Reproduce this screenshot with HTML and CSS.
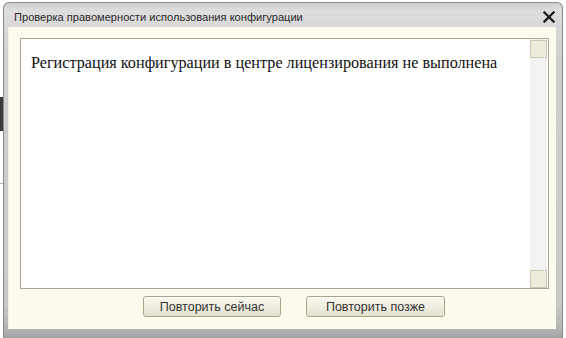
FILE: index.html
```html
<!DOCTYPE html>
<html lang="ru">
<head>
<meta charset="utf-8">
<title>Проверка правомерности использования конфигурации</title>
<link rel="stylesheet" href="styles.css">
</head>
<body>
<div class="desk">
  <div class="desk-dark"></div>
  <div class="desk-line"></div>
</div>
<div class="window">
  <div class="titlebar">
    <span class="title">Проверка правомерности использования конфигурации</span>
    <span class="close">
      <svg width="12" height="12" viewBox="0 0 12 12"><path d="M1.5 1.5 L10.5 10.5 M10.5 1.5 L1.5 10.5" stroke="#1e1e1e" stroke-width="2.3" stroke-linecap="square"/></svg>
    </span>
  </div>
  <div class="frame">
    <div class="textbox">
      <div class="message">Регистрация конфигурации в центре лицензирования не выполнена</div>
      <div class="scrollbar">
        <div class="sb-btn"></div>
        <div class="sb-track"></div>
        <div class="sb-btn"></div>
      </div>
    </div>
    <div class="buttons">
      <button class="btn btn-now">Повторить сейчас</button>
      <button class="btn btn-later">Повторить позже</button>
    </div>
  </div>
</div>
</body>
</html>
```
FILE: styles.css
```css
html, body {
  margin: 0;
  padding: 0;
}
body {
  width: 566px;
  height: 338px;
  overflow: hidden;
  background: #ffffff;
  display: flex;
  align-items: flex-start;
  font-family: "Liberation Sans", Arial, sans-serif;
}
.desk {
  width: 3px;
  flex: none;
  display: flex;
  flex-direction: column;
}
.desk-dark {
  margin-top: 97px;
  height: 34px;
  background: #3a3a3a;
}
.desk-line {
  margin-top: 52px;
  height: 1px;
  background: #b0b0b0;
}
.window {
  flex: none;
  margin-top: 2px;
  width: 558px;
  height: 340px;
  border: 1px solid #8c8c8c;
  border-bottom: none;
  border-radius: 6px 6px 0 0;
  background: linear-gradient(to bottom, #cfcfcf 0px, #dedede 8px, #d8d8d8 24px, #cfcfcf 60px, #c9c9c9 300px, #b4b4b4 326px, #a0a0a0 336px);
  display: flex;
  flex-direction: column;
}
.titlebar {
  height: 24px;
  display: flex;
  align-items: center;
  justify-content: space-between;
  padding: 0 7px 0 10px;
}
.title {
  font-size: 11.1px;
  color: #2a2a2a;
  margin-top: 4px;
}
.close {
  display: flex;
  margin-top: 4px;
}
.frame {
  box-sizing: border-box;
  margin: 0 6px 0 4px;
  height: 302px;
  background: #fcfbed;
  box-shadow: inset 1px 0 0 #f3f1df;
  padding: 11px 7px 0 12px;
  display: flex;
  flex-direction: column;
}
.textbox {
  height: 249px;
  border: 1px solid #a9a796;
  background: #ffffff;
  display: flex;
}
.message {
  flex: 1;
  font-family: "Liberation Serif", "Times New Roman", serif;
  font-size: 16.2px;
  color: #111;
  padding: 15px 0 0 10px;
}
.scrollbar {
  width: 17px;
  margin-right: 1px;
  display: flex;
  flex-direction: column;
  background: #f2f2f1;
}
.sb-btn {
  height: 16px;
  border: 1px solid #c8c6b4;
  background: #edecdb;
  box-sizing: content-box;
  width: 15px;
}
.sb-btn:first-child {
  margin-top: 1px;
}
.sb-track {
  flex: 1;
}
.buttons {
  display: flex;
  gap: 25px;
  padding-left: 123px;
  margin-top: 7px;
}
.btn {
  height: 21px;
  border: 1px solid #a9a48a;
  border-radius: 3px;
  background: linear-gradient(to bottom, #faf9f0 0%, #efede0 55%, #e3e0cd 100%);
  font-family: "Liberation Sans", Arial, sans-serif;
  font-size: 12.5px;
  color: #333;
  padding: 0;
  box-shadow: inset 0 1px 0 #ffffff;
}
.btn-now { width: 138px; }
.btn-later { width: 139px; }
```
